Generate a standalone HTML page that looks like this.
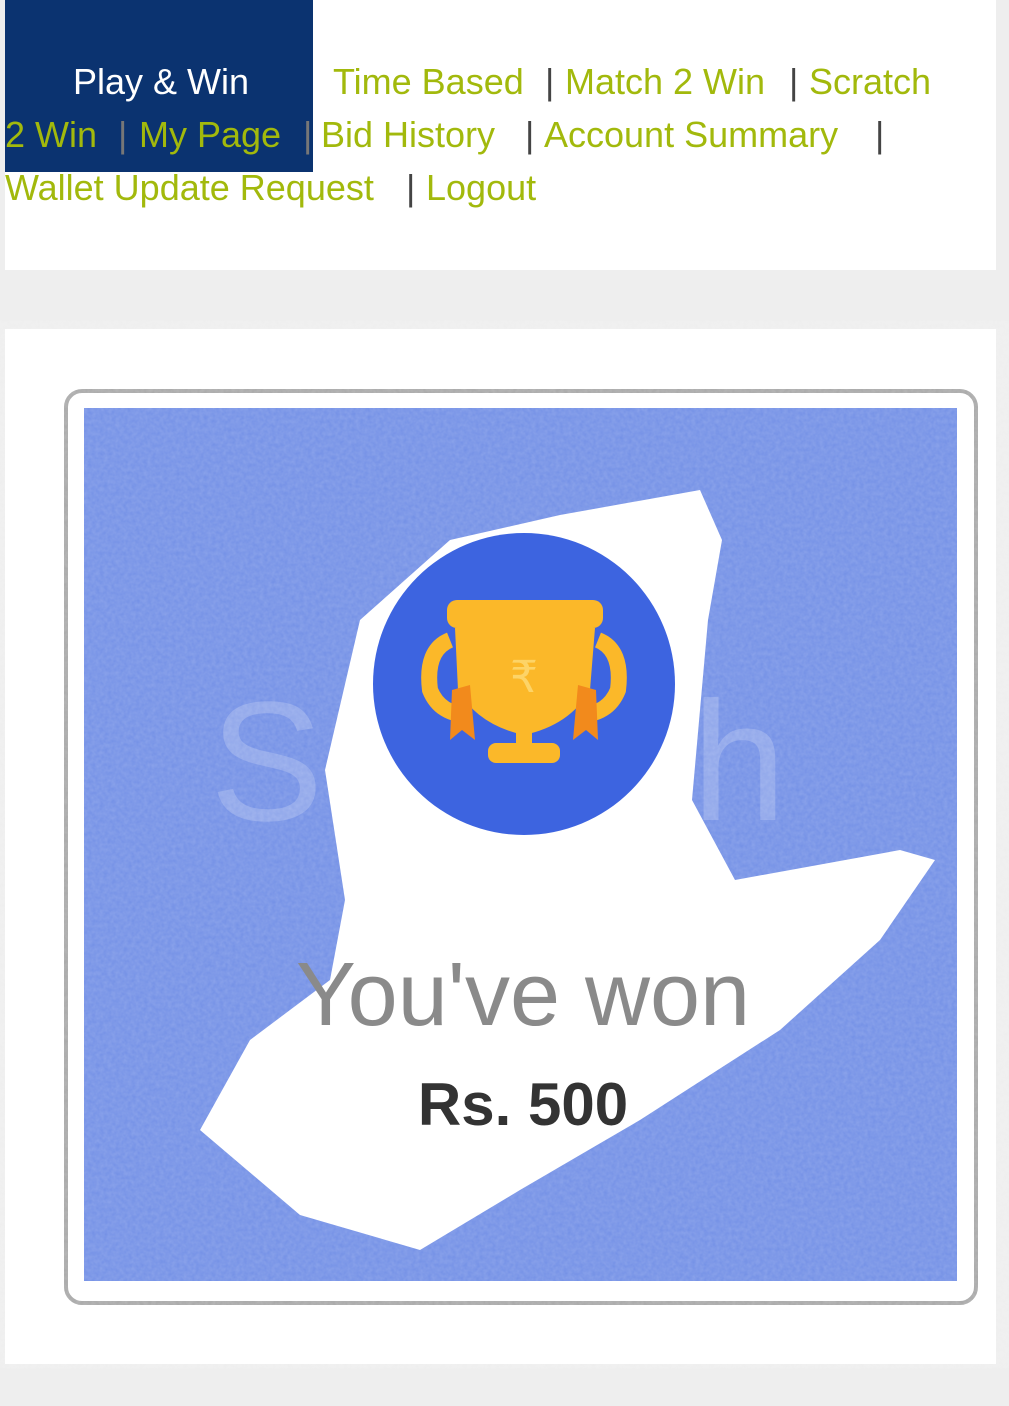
<!DOCTYPE html>
<html><head><meta charset="utf-8"><style>
body{margin:0;width:1009px;height:1406px;background:#eeeeee;position:relative;overflow:hidden;font-family:"Liberation Sans",sans-serif}
.box{position:absolute;background:#fff}
.t{position:absolute;font-size:36px;color:#a2b90c;white-space:nowrap;line-height:1}
.p{position:absolute;font-size:36px;color:#444;line-height:1}
</style></head><body>
<div class="box" style="left:5px;top:0;width:991px;height:270px"></div>
<div style="position:absolute;left:5px;top:0;width:308px;height:172px;background:#0b3370"></div>
<div class="t" style="left:73px;top:64px;color:#fff">Play &amp; Win</div>
<div class="t" style="left:333px;top:64px">Time Based</div>
<div class="p" style="left:545px;top:64px">|</div>
<div class="t" style="left:565px;top:64px">Match 2 Win</div>
<div class="p" style="left:789px;top:64px">|</div>
<div class="t" style="left:809px;top:64px">Scratch</div>
<div class="t" style="left:5px;top:117px">2 Win</div>
<div class="p" style="left:118px;top:117px;color:#777">|</div>
<div class="t" style="left:139px;top:117px">My Page</div>
<div class="p" style="left:303px;top:117px;color:#777">|</div>
<div class="t" style="left:321px;top:117px">Bid History</div>
<div class="p" style="left:525px;top:117px">|</div>
<div class="t" style="left:544px;top:117px">Account Summary</div>
<div class="p" style="left:875px;top:117px">|</div>
<div class="t" style="left:5px;top:170px">Wallet Update Request</div>
<div class="p" style="left:406px;top:170px">|</div>
<div class="t" style="left:426px;top:170px">Logout</div>

<div class="box" style="left:5px;top:329px;width:991px;height:1035px"></div>
<div style="position:absolute;left:64px;top:389px;width:906px;height:908px;border:4px solid #a8a8a8;border-radius:18px;background:#fff"></div>
<svg style="position:absolute;left:0;top:0" width="1009" height="1406">
<defs><filter id="n"><feTurbulence type="fractalNoise" baseFrequency="0.25" numOctaves="2" seed="3"/><feColorMatrix values="0 0 0 0 1 0 0 0 0 1 0 0 0 0 1 0 0 0 0.35 0"/></filter></defs>
<rect x="84" y="408" width="873" height="873" fill="#7390e6"/>
<rect x="84" y="408" width="873" height="873" filter="url(#n)" opacity="0.5"/>
<text x="210" y="820" font-family="Liberation Sans" font-size="170" fill="#fff" opacity="0.2">Scratch</text>
<polygon fill="#fff" points="700,490 722,540 708,620 692,800 735,880 900,850 935,860 880,940 780,1030 640,1120 520,1190 420,1250 300,1215 200,1130 250,1040 330,980 345,900 325,770 360,620 450,540 560,515"/>
<circle cx="524" cy="684" r="151" fill="#3d64e0"/>
<path d="M450,640 Q425,650 430,690 Q440,715 470,715" stroke="#fbb829" stroke-width="16" fill="none"/>
<path d="M598,640 Q623,650 618,690 Q608,715 578,715" stroke="#fbb829" stroke-width="16" fill="none"/>
<rect x="447" y="600" width="156" height="28" rx="10" fill="#fbb829"/>
<path d="M455,628 L595,628 L590,690 Q570,725 524,735 Q478,725 458,690 Z" fill="#fbb829"/>
<rect x="516" y="725" width="16" height="25" fill="#fbb829"/>
<rect x="488" y="743" width="72" height="20" rx="8" fill="#fbb829"/>
<polygon points="452,690 470,685 475,740 462,730 450,740" fill="#f28a1c"/>
<polygon points="596,690 578,685 573,740 586,730 598,740" fill="#f28a1c"/>
<text x="524" y="692" font-family="Liberation Sans" font-size="44" fill="#fdd467" text-anchor="middle">₹</text>
<text x="523" y="1025" font-family="Liberation Sans" font-size="90" fill="#8a8a8a" text-anchor="middle">You've won</text>
<text x="523" y="1125" font-family="Liberation Sans" font-size="60" font-weight="bold" fill="#333" text-anchor="middle">Rs. 500</text>
</svg>
</body></html>
